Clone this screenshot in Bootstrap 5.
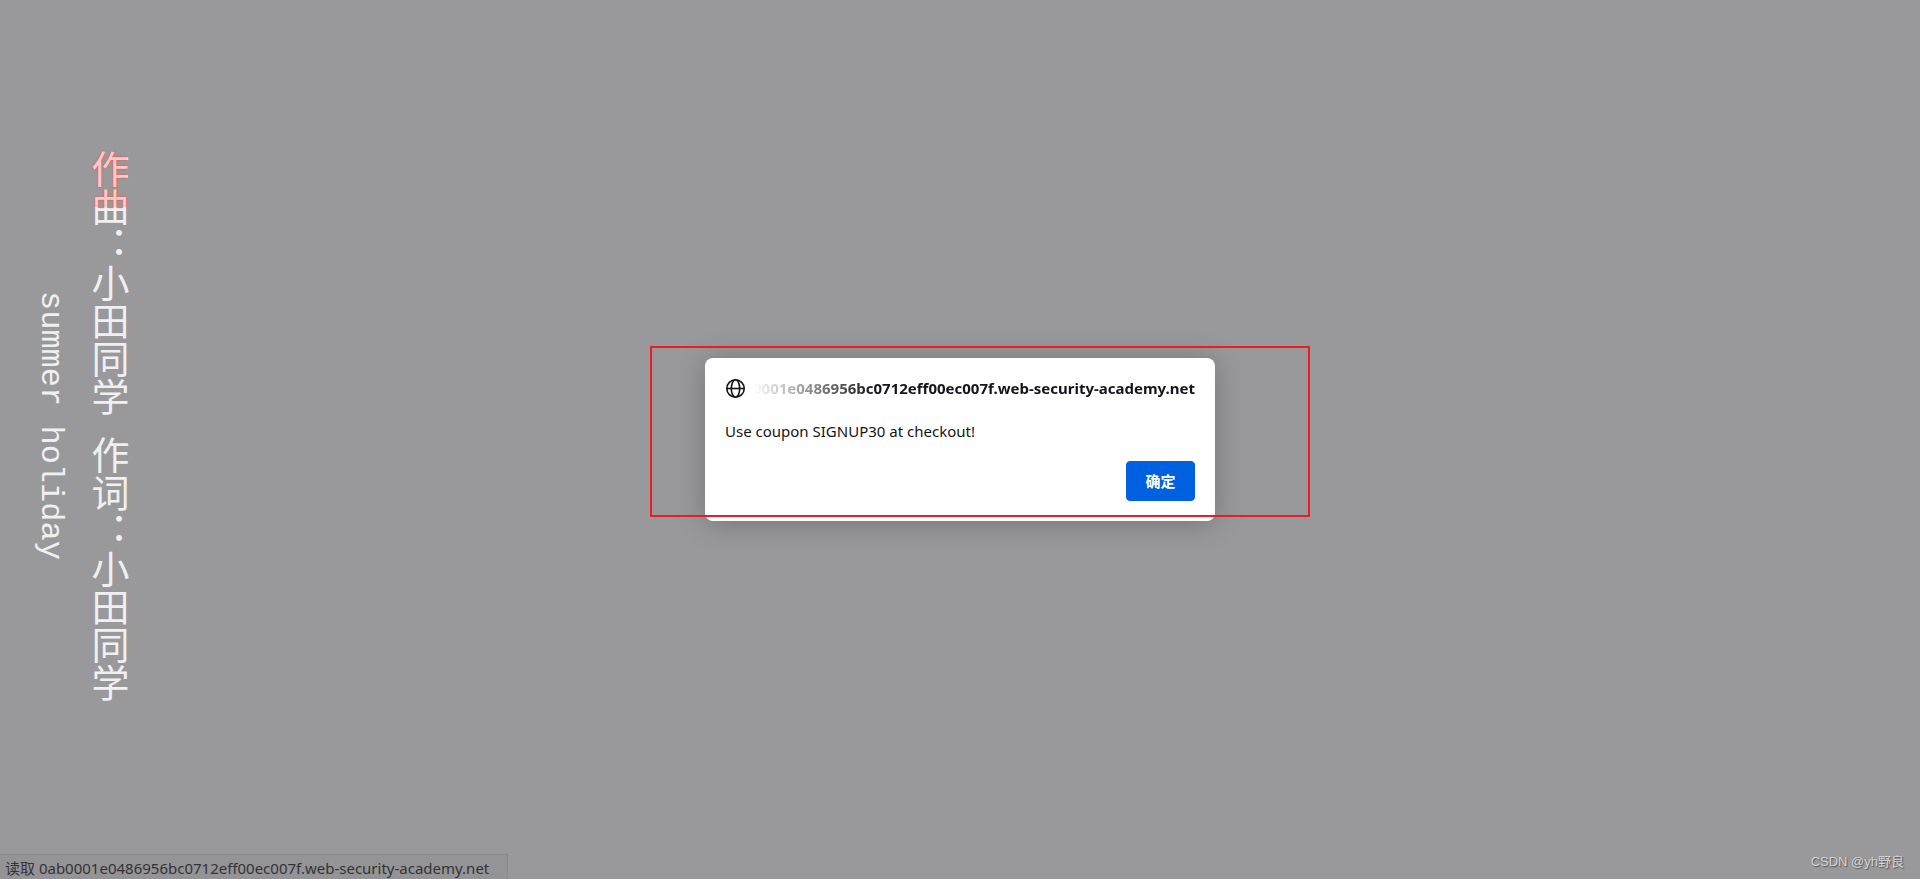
<!DOCTYPE html>
<html lang="zh-CN">
<head>
<meta charset="utf-8">
<meta name="viewport" content="width=device-width, initial-scale=1">
<title>web-security-academy.net</title>
<link href="https://cdn.jsdelivr.net/npm/bootstrap@5.3.0/dist/css/bootstrap.min.css" rel="stylesheet">
<style>
  body {
    background: #99999b;
    color: #15141a;
    font-family: "Noto Sans", "Noto Sans CJK SC", sans-serif;
    font-size: 15px;
    line-height: 20px;
  }
  /* desktop lyrics floating over the page */
  .lyrics {
    top: 0;
    bottom: 28px;
    left: 27px;
    color: #f0f0f0;
    line-height: 46px;
  }
  .lyric-line {
    writing-mode: vertical-rl;
    font-family: "Liberation Mono", "Noto Sans CJK SC", monospace;
    white-space: pre;
  }
  .lyric-title, .lyric-gap { font-size: 32px; }
  .lyric-text { font-size: 38px; }
  .lyric-text::before {
    content: attr(data-sung);
    position: absolute;
    top: 0;
    left: 0;
    height: 57px;
    overflow: hidden;
    color: #ffc8c8;
    text-shadow: 0 0 2px #f04848, 0 0 1px #f04848;
  }
  .dialog-wrap { width: 510px; }
  .dialog-box {
    border-radius: 8px;
    padding: 20px;
    box-shadow: 0 2px 28px rgba(0, 0, 0, .25);
  }
  .origin {
    font-weight: 700;
    -webkit-mask-image: linear-gradient(to right, transparent, #000 120px);
    mask-image: linear-gradient(to right, transparent, #000 120px);
  }
  .message { margin: 23px 0 20px; }
  .btn-ok {
    --bs-btn-bg: #0061e0;
    --bs-btn-border-color: #0061e0;
    --bs-btn-hover-bg: #0250bb;
    --bs-btn-border-radius: 4px;
    --bs-btn-font-size: 15px;
    --bs-btn-font-weight: 700;
    width: 69px;
    height: 40px;
  }
  .callout {
    inset: -12px -95px 4px -55px;
    border: 2px solid #ed1c24;
  }
  .status-bar {
    height: 25px;
    padding: 3px 18px 0 5px;
    background: #949497;
    border: solid #88888b;
    border-width: 1px 1px 0 0;
    color: #333336;
  }
  .watermark {
    right: 16px;
    bottom: 7px;
    color: #d4d4d5;
    font: 13px/20px "Liberation Sans", "Noto Sans CJK SC", sans-serif;
    text-shadow: 1px 1px 1px #555;
  }
</style>
</head>
<body class="position-relative min-vh-100 overflow-hidden">
  <main class="d-flex justify-content-center align-items-center min-vh-100">
    <div class="dialog-wrap position-relative">
      <section class="dialog-box bg-white" role="alertdialog" aria-labelledby="origin" aria-describedby="message">
        <header class="d-flex align-items-center gap-2">
          <svg class="flex-shrink-0" width="20" height="20" viewBox="0 0 20 20" fill="none" stroke="#15141a" stroke-width="1.6" aria-hidden="true">
            <circle cx="10.5" cy="10.5" r="8.7"/>
            <ellipse cx="10.5" cy="10.5" rx="4.2" ry="8.7"/>
            <path d="M1.8 10.5h17.4"/>
          </svg>
          <div class="origin d-flex justify-content-end flex-grow-1 overflow-hidden text-nowrap" id="origin">0ab0001e0486956bc0712eff00ec007f.web-security-academy.net</div>
        </header>
        <p class="message" id="message">Use coupon SIGNUP30 at checkout!</p>
        <div class="d-flex justify-content-end">
          <button class="btn btn-primary btn-ok p-0" type="button">确定</button>
        </div>
      </section>
      <div class="callout position-absolute pe-none"></div>
    </div>
  </main>

  <aside class="lyrics position-absolute d-flex align-items-center gap-2">
    <div class="lyric-line lyric-title">summer holiday</div>
    <div class="lyric-line lyric-text position-relative" data-sung="作曲">作曲：小田同学<span class="lyric-gap"> </span>作词：小田同学</div>
  </aside>

  <div class="status-bar position-absolute bottom-0 start-0 text-nowrap">读取 0ab0001e0486956bc0712eff00ec007f.web-security-academy.net</div>
  <div class="watermark position-absolute">CSDN @yh野良</div>
<script src="https://cdn.jsdelivr.net/npm/bootstrap@5.3.0/dist/js/bootstrap.bundle.min.js"></script>
</body>
</html>
